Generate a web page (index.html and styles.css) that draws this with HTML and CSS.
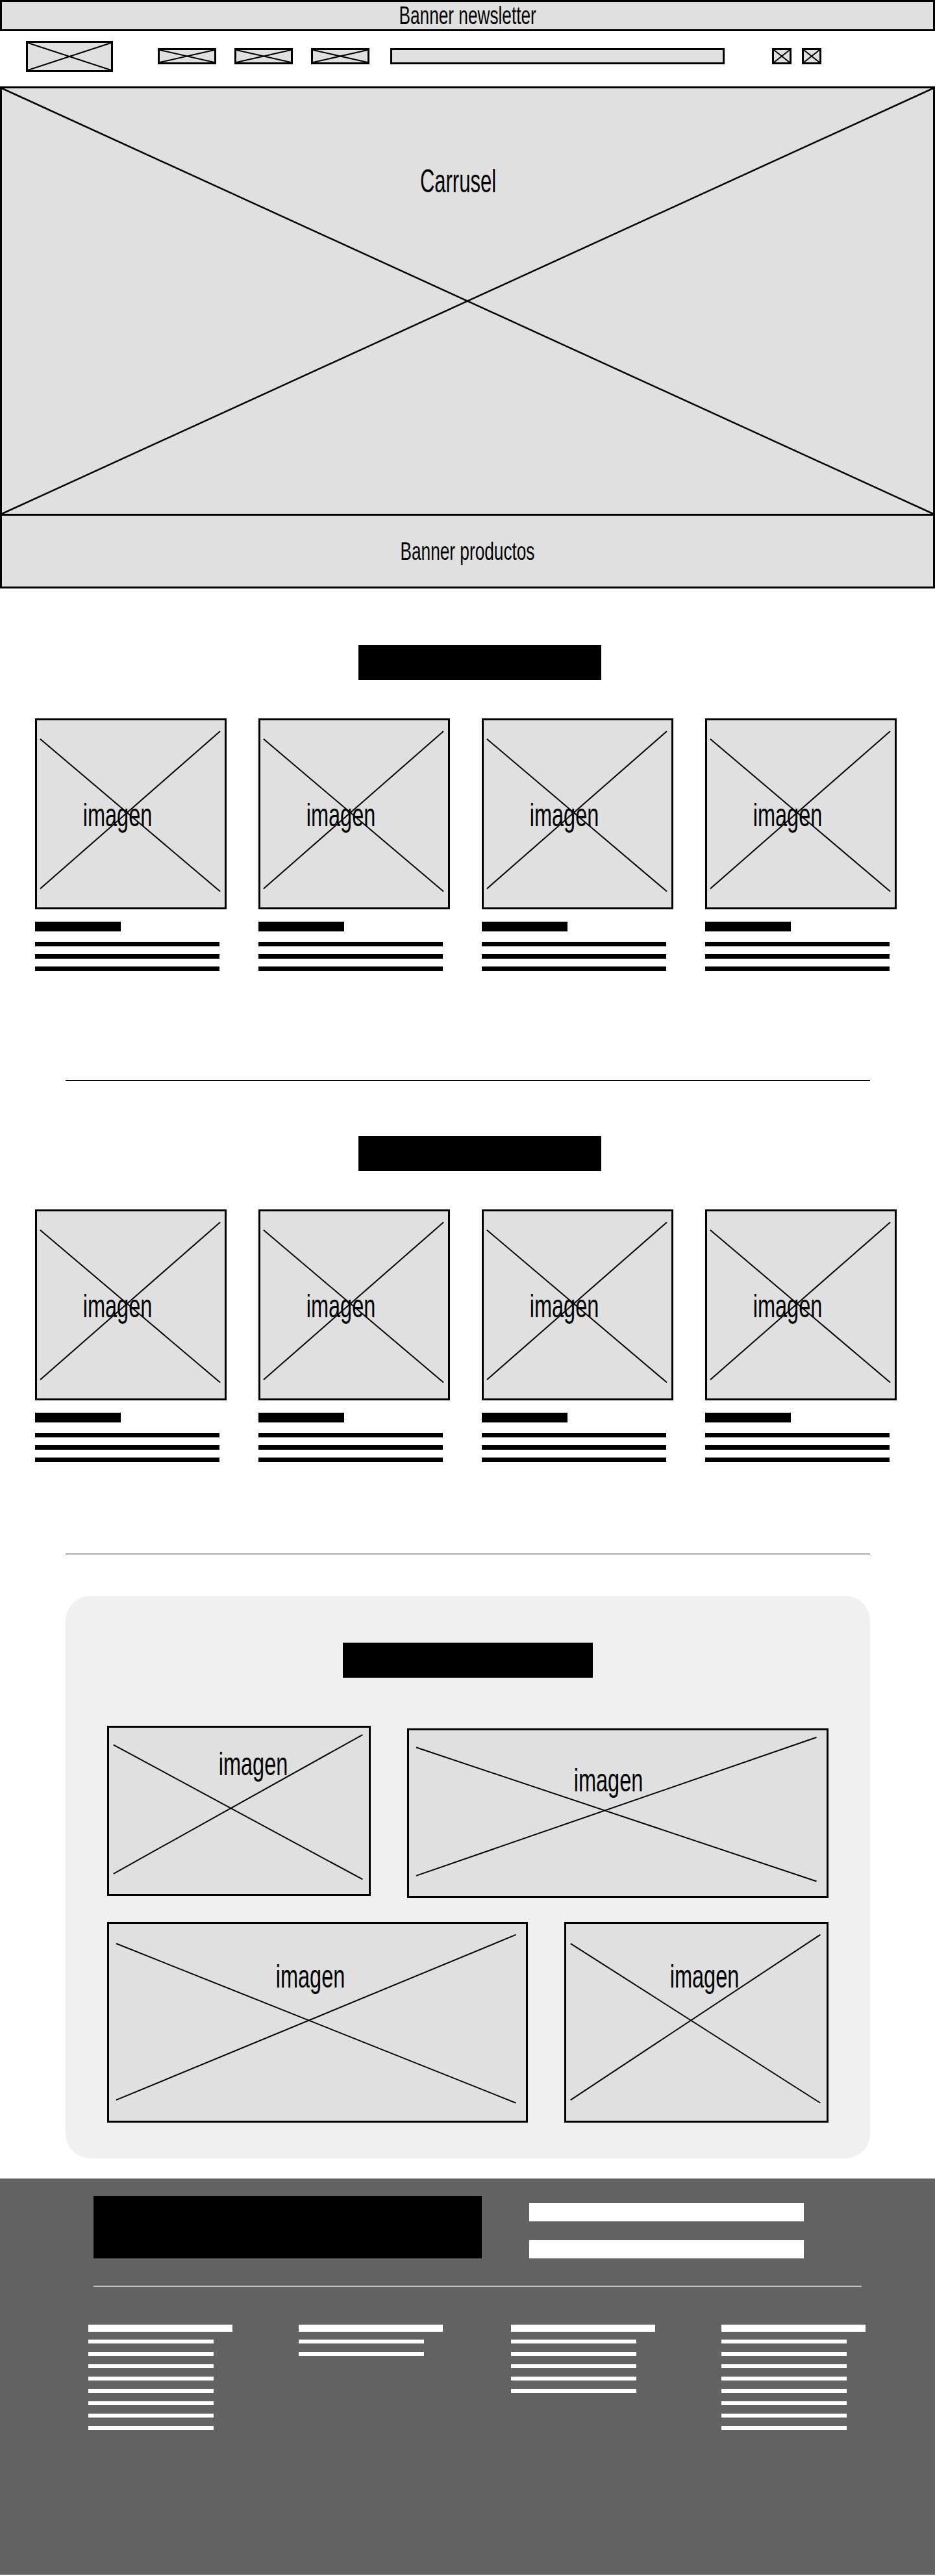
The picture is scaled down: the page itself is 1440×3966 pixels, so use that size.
FILE: index.html
```html
<!DOCTYPE html>
<html lang="es">
<head>
<meta charset="utf-8">
<title>Wireframe tienda</title>
<link rel="stylesheet" href="styles.css">
</head>
<body>
<div class="newsletter"><span class="t t-banner">Banner newsletter</span></div>

<header class="header">
  <div class="ph logo"><svg class="xx"><line x1="0" y1="0" x2="100%" y2="100%"/><line x1="0" y1="100%" x2="100%" y2="0"/></svg></div>
  <nav class="nav">
    <div class="ph nav-item"><svg class="xx"><line x1="0" y1="0" x2="100%" y2="100%"/><line x1="0" y1="100%" x2="100%" y2="0"/></svg></div>
    <div class="ph nav-item"><svg class="xx"><line x1="0" y1="0" x2="100%" y2="100%"/><line x1="0" y1="100%" x2="100%" y2="0"/></svg></div>
    <div class="ph nav-item"><svg class="xx"><line x1="0" y1="0" x2="100%" y2="100%"/><line x1="0" y1="100%" x2="100%" y2="0"/></svg></div>
  </nav>
  <div class="ph search"></div>
  <div class="icons">
    <div class="ph icon"><svg class="xx"><line x1="0" y1="0" x2="100%" y2="100%"/><line x1="0" y1="100%" x2="100%" y2="0"/></svg></div>
    <div class="ph icon"><svg class="xx"><line x1="0" y1="0" x2="100%" y2="100%"/><line x1="0" y1="100%" x2="100%" y2="0"/></svg></div>
  </div>
</header>

<section class="hero">
  <div class="carousel">
    <svg class="xx xx-big"><line x1="0" y1="0" x2="100%" y2="100%"/><line x1="0" y1="100%" x2="100%" y2="0"/></svg>
    <span class="t t-big">Carrusel</span>
  </div>
  <div class="banner-products"><span class="t t-banner">Banner productos</span></div>
</section>

<section class="products">
  <div class="title-bar"></div>
  <div class="cards">
    <article class="card">
      <div class="ph card-img"><svg class="xx"><line x1="1.7%" y1="10%" x2="97.6%" y2="91.5%"/><line x1="1.7%" y1="90%" x2="97.6%" y2="5.8%"/></svg><span class="t t-img">imagen</span></div>
      <div class="c-title"></div><div class="c-line first"></div><div class="c-line"></div><div class="c-line"></div>
    </article>
    <article class="card">
      <div class="ph card-img"><svg class="xx"><line x1="1.7%" y1="10%" x2="97.6%" y2="91.5%"/><line x1="1.7%" y1="90%" x2="97.6%" y2="5.8%"/></svg><span class="t t-img">imagen</span></div>
      <div class="c-title"></div><div class="c-line first"></div><div class="c-line"></div><div class="c-line"></div>
    </article>
    <article class="card">
      <div class="ph card-img"><svg class="xx"><line x1="1.7%" y1="10%" x2="97.6%" y2="91.5%"/><line x1="1.7%" y1="90%" x2="97.6%" y2="5.8%"/></svg><span class="t t-img">imagen</span></div>
      <div class="c-title"></div><div class="c-line first"></div><div class="c-line"></div><div class="c-line"></div>
    </article>
    <article class="card">
      <div class="ph card-img"><svg class="xx"><line x1="1.7%" y1="10%" x2="97.6%" y2="91.5%"/><line x1="1.7%" y1="90%" x2="97.6%" y2="5.8%"/></svg><span class="t t-img">imagen</span></div>
      <div class="c-title"></div><div class="c-line first"></div><div class="c-line"></div><div class="c-line"></div>
    </article>
  </div>
</section>

<div class="divider divider-1"></div>

<section class="products products-2">
  <div class="title-bar"></div>
  <div class="cards">
    <article class="card">
      <div class="ph card-img"><svg class="xx"><line x1="1.7%" y1="10%" x2="97.6%" y2="91.5%"/><line x1="1.7%" y1="90%" x2="97.6%" y2="5.8%"/></svg><span class="t t-img">imagen</span></div>
      <div class="c-title"></div><div class="c-line first"></div><div class="c-line"></div><div class="c-line"></div>
    </article>
    <article class="card">
      <div class="ph card-img"><svg class="xx"><line x1="1.7%" y1="10%" x2="97.6%" y2="91.5%"/><line x1="1.7%" y1="90%" x2="97.6%" y2="5.8%"/></svg><span class="t t-img">imagen</span></div>
      <div class="c-title"></div><div class="c-line first"></div><div class="c-line"></div><div class="c-line"></div>
    </article>
    <article class="card">
      <div class="ph card-img"><svg class="xx"><line x1="1.7%" y1="10%" x2="97.6%" y2="91.5%"/><line x1="1.7%" y1="90%" x2="97.6%" y2="5.8%"/></svg><span class="t t-img">imagen</span></div>
      <div class="c-title"></div><div class="c-line first"></div><div class="c-line"></div><div class="c-line"></div>
    </article>
    <article class="card">
      <div class="ph card-img"><svg class="xx"><line x1="1.7%" y1="10%" x2="97.6%" y2="91.5%"/><line x1="1.7%" y1="90%" x2="97.6%" y2="5.8%"/></svg><span class="t t-img">imagen</span></div>
      <div class="c-title"></div><div class="c-line first"></div><div class="c-line"></div><div class="c-line"></div>
    </article>
  </div>
</section>

<div class="divider divider-2"></div>

<section class="featured">
  <div class="f-title"></div>
  <div class="f-row f-row-1">
    <div class="ph f-img f1"><svg class="xx"><line x1="1.7%" y1="10.3%" x2="97.6%" y2="91.2%"/><line x1="1.7%" y1="87.8%" x2="97.6%" y2="4.2%"/></svg><span class="t t-img">imagen</span></div>
    <div class="ph f-img f2"><svg class="xx"><line x1="1.7%" y1="10.3%" x2="97.6%" y2="91.2%"/><line x1="1.7%" y1="87.8%" x2="97.6%" y2="4.2%"/></svg><span class="t t-img">imagen</span></div>
  </div>
  <div class="f-row f-row-2">
    <div class="ph f-img f3"><svg class="xx"><line x1="1.7%" y1="10%" x2="97.6%" y2="91%"/><line x1="1.7%" y1="89.5%" x2="97.6%" y2="5.5%"/></svg><span class="t t-img">imagen</span></div>
    <div class="ph f-img f4"><svg class="xx"><line x1="1.7%" y1="10%" x2="97.6%" y2="91%"/><line x1="1.7%" y1="89.5%" x2="97.6%" y2="5.5%"/></svg><span class="t t-img">imagen</span></div>
  </div>
</section>

<footer class="footer">
  <div class="f-top">
    <div class="f-logo"></div>
    <div class="f-inputs">
      <div class="f-input"></div>
      <div class="f-input"></div>
    </div>
  </div>
  <div class="f-hr"></div>
  <div class="f-cols">
    <div class="f-col">
      <div class="fc-head"></div>
      <div class="fc-line first"></div><div class="fc-line"></div><div class="fc-line"></div><div class="fc-line"></div>
      <div class="fc-line"></div><div class="fc-line"></div><div class="fc-line"></div><div class="fc-line"></div>
    </div>
    <div class="f-col">
      <div class="fc-head"></div>
      <div class="fc-line first"></div><div class="fc-line"></div>
    </div>
    <div class="f-col">
      <div class="fc-head"></div>
      <div class="fc-line first"></div><div class="fc-line"></div><div class="fc-line"></div><div class="fc-line"></div><div class="fc-line"></div>
    </div>
    <div class="f-col">
      <div class="fc-head"></div>
      <div class="fc-line first"></div><div class="fc-line"></div><div class="fc-line"></div><div class="fc-line"></div>
      <div class="fc-line"></div><div class="fc-line"></div><div class="fc-line"></div><div class="fc-line"></div>
    </div>
  </div>
</footer>
</body>
</html>
```

FILE: styles.css
```css
* { box-sizing: border-box; }

html, body { margin: 0; padding: 0; }

body {
  width: 1440px;
  background: #ffffff;
  font-family: "Liberation Sans", Arial, sans-serif;
  color: #000;
}

/* generic placeholder box */
.ph {
  position: relative;
  background: #e0e0e0;
  border: 3px solid #000;
}

.xx {
  position: absolute;
  left: 0;
  top: 0;
  width: 100%;
  height: 100%;
  overflow: visible;
}

.xx line {
  stroke: #000;
  stroke-width: 2;
}

.xx-big line {
  stroke-width: 2.5;
}

.t {
  position: relative;
  z-index: 1;
  display: inline-block;
  line-height: 1;
  white-space: nowrap;
  color: #000;
}

.t-banner {
  font-size: 38px;
  transform: scaleX(0.69);
}

.t-big {
  font-size: 50px;
  transform: scaleX(0.62);
}

.t-img {
  font-size: 50px;
  transform: scaleX(0.65);
}

/* newsletter */
.newsletter {
  height: 48px;
  border: 3px solid #000;
  background: #e0e0e0;
  display: flex;
  align-items: center;
  justify-content: center;
}

/* header */
.header {
  height: 85px;
  display: flex;
  align-items: center;
  padding: 0 0 8px 40px;
}

.logo {
  width: 134px;
  height: 48px;
}

.nav {
  display: flex;
  gap: 28px;
  margin-left: 69px;
}

.nav-item {
  width: 90px;
  height: 25px;
}

.search {
  width: 515px;
  height: 25px;
  margin-left: 32px;
}

.icons {
  display: flex;
  gap: 16px;
  margin-left: 73px;
}

.icon {
  width: 30px;
  height: 25px;
}

/* hero */
.carousel {
  position: relative;
  height: 658px;
  border: 3px solid #000;
  border-bottom: 0;
  background: #e0e0e0;
  display: flex;
  justify-content: center;
  align-items: flex-start;
  padding: 118px 30px 0 0;
}

.banner-products {
  height: 115px;
  border: 3px solid #000;
  background: #e0e0e0;
  display: flex;
  align-items: center;
  justify-content: center;
}

/* product sections */
.products {
  padding-top: 87px;
}

.products-2 {
  padding-top: 85px;
}

.title-bar {
  width: 374px;
  height: 54px;
  background: #000;
  margin-left: 552px;
}

.cards {
  display: flex;
  gap: 49px;
  padding-left: 54px;
  margin-top: 59px;
}

.card {
  width: 295px;
}

.card-img {
  height: 294px;
  display: flex;
  justify-content: center;
  align-items: flex-start;
  padding: 121px 42px 0 0;
}

.c-title {
  width: 132px;
  height: 15px;
  background: #000;
  margin-top: 19px;
}

.c-line {
  width: 284px;
  height: 7px;
  background: #000;
  margin-top: 12px;
}

.c-line.first {
  margin-top: 16px;
}

.divider {
  width: 1239px;
  height: 1px;
  background: #000;
  margin-left: 101px;
}

.divider-1 {
  margin-top: 168px;
}

.divider-2 {
  margin-top: 141px;
}

/* featured */
.featured {
  width: 1239px;
  margin: 64px 0 0 101px;
  border-radius: 38px;
  background: #f0f0f0;
  padding: 72px 64px 55px;
}

.f-title {
  width: 385px;
  height: 54px;
  background: #000;
  margin: 0 auto;
}

.f-row {
  display: flex;
  justify-content: space-between;
  align-items: flex-start;
}

.f-row-1 {
  margin-top: 74px;
}

.f-row-2 {
  margin-top: 37px;
}

.f-img {
  display: flex;
  justify-content: center;
  align-items: flex-start;
}

.f1 {
  width: 406px;
  height: 262px;
  padding: 31px 0 0 44px;
}

.f2 {
  width: 649px;
  height: 261px;
  margin-top: 4px;
  padding: 52px 30px 0 0;
}

.f3 {
  width: 648px;
  height: 309px;
  padding: 56px 22px 0 0;
}

.f4 {
  width: 407px;
  height: 309px;
  padding: 56px 0 0 24px;
}

/* footer */
.footer {
  margin-top: 31px;
  height: 610px;
  background: #636363;
  padding: 27px 0 0 144px;
}

.f-top {
  display: flex;
  align-items: flex-start;
}

.f-logo {
  width: 598px;
  height: 96px;
  background: #000;
}

.f-inputs {
  display: flex;
  flex-direction: column;
  gap: 29px;
  margin-left: 73px;
  padding-top: 11px;
}

.f-input {
  width: 423px;
  height: 28px;
  background: #fff;
}

.f-hr {
  width: 1183px;
  height: 2px;
  background: #c4c4c4;
  margin-top: 42px;
}

.f-cols {
  display: grid;
  grid-template-columns: 324px 327px 324px 222px;
  margin-top: 58px;
  margin-left: -8px;
}

.fc-head {
  width: 222px;
  height: 11px;
  background: #fff;
}

.fc-line {
  width: 193px;
  height: 6px;
  background: #fff;
  margin-top: 13px;
}

.fc-line.first {
  margin-top: 12px;
}
```
